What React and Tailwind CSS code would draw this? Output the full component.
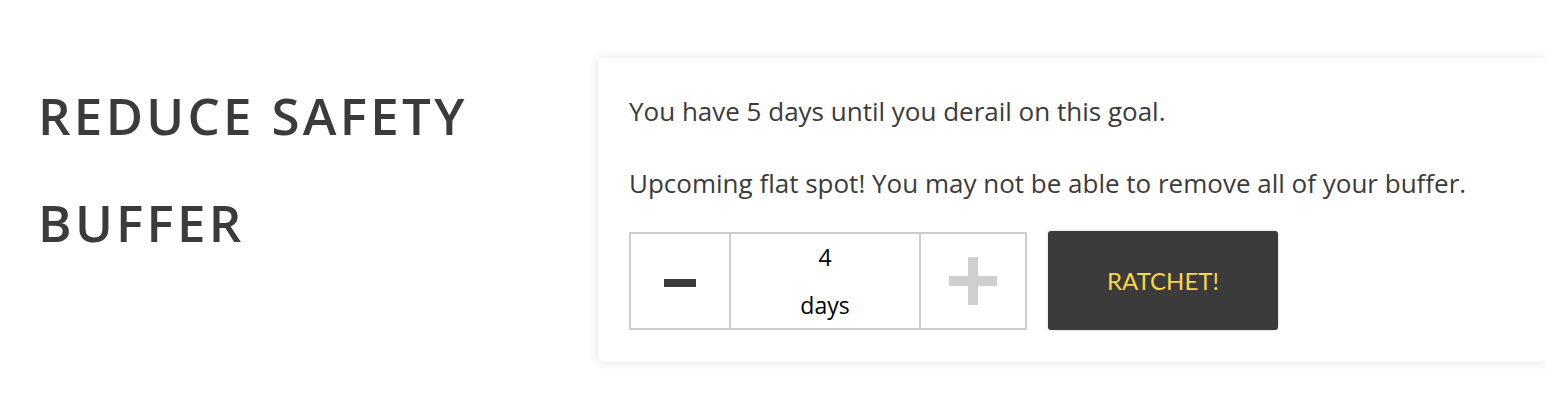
export default function App() {
  return (
    <div className="w-[1546px] h-[420px] bg-white flex overflow-hidden">
      <div className="w-[598px] shrink-0 pl-[38px] pt-[62px]">
        <h1 className="font-['Open_Sans',sans-serif] font-semibold text-[51px] leading-[107px] text-[#3b3b3b] uppercase tracking-[3.3px]">
          Reduce Safety
          <br />
          Buffer
        </h1>
      </div>

      <div className="flex-1 mt-[58px] h-[304px] bg-white shadow-[0_0_10px_rgba(0,0,0,0.12)] pl-[31px] pt-[39px]">
        <p className="font-['Open_Sans',sans-serif] text-[26px] leading-[28px] text-[#3b3b3b]">
          You have 5 days until you derail on this goal.
        </p>
        <p className="mt-[44px] font-['Open_Sans',sans-serif] text-[26px] leading-[28px] text-[#3b3b3b]">
          Upcoming flat spot! You may not be able to remove all of your buffer.
        </p>

        <div className="mt-[34px] flex items-center gap-[21px]">
          <Stepper value={4} unit="days" />
          <button
            type="button"
            className="w-[230px] h-[99px] rounded-[3px] bg-[#3b3b3b] shadow-[0_0_3px_rgba(0,0,0,0.2)] font-['Lato',sans-serif] text-[24px] text-[#f8d447]"
          >
            RATCHET!
          </button>
        </div>
      </div>
    </div>
  )
}

function Stepper({ value, unit }) {
  return (
    <div className="flex h-[98px] border-2 border-[#cccccc]">
      <button
        type="button"
        aria-label="Decrease"
        className="w-[98px] grid place-items-center"
      >
        <span className="block w-[32px] h-[8px] bg-[#3b3b3b] mt-[4px]" />
      </button>
      <div className="w-[192px] border-x-2 border-[#cccccc] flex flex-col items-center justify-center font-['Open_Sans',sans-serif] text-[23px] leading-[48px] text-black">
        <span>{value}</span>
        <span>{unit}</span>
      </div>
      <button
        type="button"
        aria-label="Increase"
        className="w-[104px] grid place-items-center"
      >
        <span className="relative block w-[48px] h-[48px]">
          <span className="absolute left-0 right-0 top-[19px] h-[10px] bg-[#cfcfcf]" />
          <span className="absolute top-0 bottom-0 left-[19px] w-[10px] bg-[#cfcfcf]" />
        </span>
      </button>
    </div>
  )
}
